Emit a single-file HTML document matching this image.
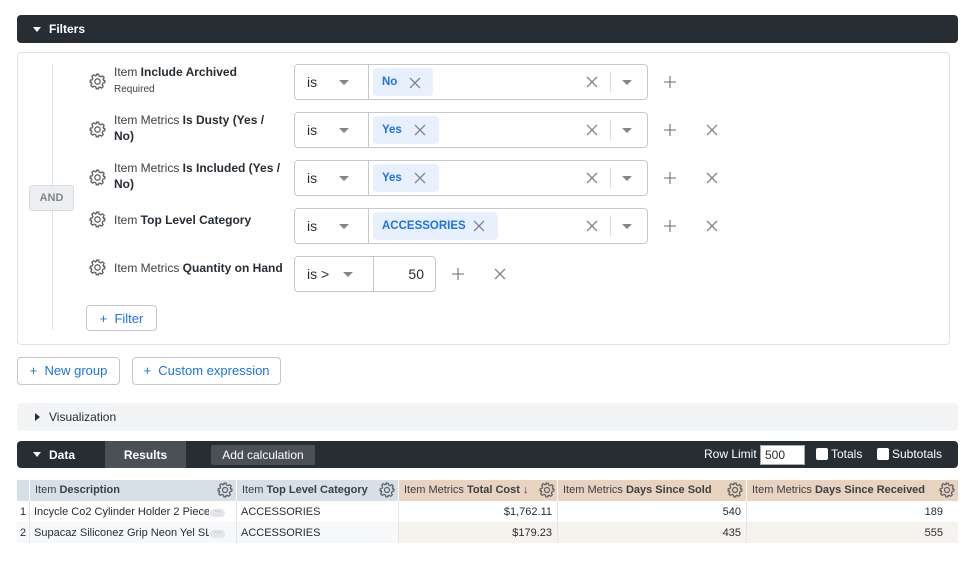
<!DOCTYPE html>
<html><head><meta charset="utf-8"><style>
*{box-sizing:border-box;margin:0;padding:0}
body{width:970px;height:566px;background:#fff;font-family:"Liberation Sans",sans-serif;color:#262d33;position:relative;overflow:hidden}
.a{position:absolute}
.bar{background:#262d33;border-radius:4px;color:#fff}
.lbl{font-size:12px;line-height:16px;color:#3c4043}
.lbl b{color:#262d33}
.box{border:1px solid #c4c8cc;background:#fff}
.chip{background:#e8f0fe;border-radius:4px;color:#1a73e8;font-weight:bold;font-size:11.5px;line-height:28px;padding-left:9px}
.btn{border:1px solid #c4c8cc;border-radius:4px;color:#1a73e8;font-size:13px;line-height:26px;text-align:center}
.th{font-size:11px;line-height:21px;padding-left:5px;color:#3c4043;overflow:hidden;white-space:nowrap}
.td{font-size:11px;line-height:22px;padding:0 5px;color:#262d33;white-space:nowrap;overflow:hidden}
</style></head><body>
<svg width="0" height="0" style="position:absolute"><defs>
<g id="gear"><circle cx="7" cy="7" r="2.2" fill="none" stroke="#5f6368" stroke-width="1.1"/><path d="M6 1h2l.4 1.6 1.3.6 1.4-.9 1.4 1.4-.9 1.4.6 1.3L13 6v2l-1.6.4-.6 1.3.9 1.4-1.4 1.4-1.4-.9-1.3.6L8 13H6l-.4-1.6-1.3-.6-1.4.9-1.4-1.4.9-1.4-.6-1.3L1 8V6l1.6-.4.6-1.3-.9-1.4 1.4-1.4 1.4.9 1.3-.6z" fill="none" stroke="#5f6368" stroke-width="1.1" stroke-linejoin="round"/></g>
<g id="xx"><path d="M1 1l10 10M11 1L1 11" stroke="#80868b" stroke-width="1.3"/></g>
<g id="pl"><path d="M6 0v12M0 6h12" stroke="#80868b" stroke-width="1.3"/></g>
<g id="car"><path d="M0 0h10l-5 5z" fill="#80868b"/></g>
</defs></svg>

<div class="a bar" style="left:17px;top:15px;width:941px;height:28px"></div>
<div class="a" style="left:33px;top:27px;width:0;height:0;border-left:4px solid transparent;border-right:4px solid transparent;border-top:5px solid #fff"></div>
<div class="a" style="left:49px;top:22px;font-size:12px;font-weight:bold;color:#fff;line-height:15px">Filters</div>

<div class="a" style="left:17px;top:52px;width:933px;height:293px;border:1px solid #dee1e5;border-radius:4px"></div>
<div class="a" style="left:52px;top:64px;width:1px;height:266px;background:#dee1e5"></div>
<div class="a" style="left:29px;top:185px;width:45px;height:26px;background:#eceff1;border:1px solid #dadce0;border-radius:3px;font-size:11px;font-weight:bold;color:#80868b;text-align:center;line-height:24px">AND</div>

<svg class="a" style="left:89px;top:73px" width="17" height="17" viewBox="0 0 14 14"><use href="#gear"/></svg>
<div class="a lbl" style="left:114px;top:64px">Item <b>Include Archived</b><br><span style="font-size:10px;color:#3c4043">Required</span></div>
<svg class="a" style="left:89px;top:121px" width="17" height="17" viewBox="0 0 14 14"><use href="#gear"/></svg>
<div class="a lbl" style="left:114px;top:112px;width:170px">Item Metrics <b>Is Dusty (Yes / No)</b></div>
<svg class="a" style="left:89px;top:169px" width="17" height="17" viewBox="0 0 14 14"><use href="#gear"/></svg>
<div class="a lbl" style="left:114px;top:160px;width:170px">Item Metrics <b>Is Included (Yes / No)</b></div>
<svg class="a" style="left:89px;top:211px" width="17" height="17" viewBox="0 0 14 14"><use href="#gear"/></svg>
<div class="a lbl" style="left:114px;top:212px">Item <b>Top Level Category</b></div>
<svg class="a" style="left:89px;top:259px" width="17" height="17" viewBox="0 0 14 14"><use href="#gear"/></svg>
<div class="a lbl" style="left:114px;top:260px">Item Metrics <b>Quantity on Hand</b></div>

<div class="a box" style="left:294px;top:64px;width:354px;height:36px;border-radius:4px"></div>
<div class="a" style="left:368px;top:64px;width:1px;height:36px;background:#c4c8cc"></div>
<div class="a" style="left:307px;top:74px;font-size:14px">is</div>
<svg class="a" style="left:339px;top:80px" width="10" height="5"><use href="#car"/></svg>
<div class="a chip" style="left:373px;top:68px;width:60px;height:28px">No</div>
<svg class="a" style="left:409px;top:77px" width="12" height="12"><use href="#xx"/></svg>
<svg class="a" style="left:586px;top:76px" width="12" height="12"><use href="#xx"/></svg>
<div class="a" style="left:610px;top:72px;width:1px;height:20px;background:#dadce0"></div>
<svg class="a" style="left:622px;top:80px" width="10" height="5"><use href="#car"/></svg>
<svg class="a" style="left:664px;top:76px" width="12" height="12"><use href="#pl"/></svg>

<div class="a box" style="left:294px;top:112px;width:354px;height:36px;border-radius:4px"></div>
<div class="a" style="left:368px;top:112px;width:1px;height:36px;background:#c4c8cc"></div>
<div class="a" style="left:307px;top:122px;font-size:14px">is</div>
<svg class="a" style="left:339px;top:128px" width="10" height="5"><use href="#car"/></svg>
<div class="a chip" style="left:373px;top:116px;width:66px;height:28px">Yes</div>
<svg class="a" style="left:414px;top:124px" width="12" height="12"><use href="#xx"/></svg>
<svg class="a" style="left:586px;top:124px" width="12" height="12"><use href="#xx"/></svg>
<div class="a" style="left:610px;top:120px;width:1px;height:20px;background:#dadce0"></div>
<svg class="a" style="left:622px;top:128px" width="10" height="5"><use href="#car"/></svg>
<svg class="a" style="left:664px;top:124px" width="12" height="12"><use href="#pl"/></svg>
<svg class="a" style="left:706px;top:124px" width="12" height="12"><use href="#xx"/></svg>

<div class="a box" style="left:294px;top:160px;width:354px;height:36px;border-radius:4px"></div>
<div class="a" style="left:368px;top:160px;width:1px;height:36px;background:#c4c8cc"></div>
<div class="a" style="left:307px;top:170px;font-size:14px">is</div>
<svg class="a" style="left:339px;top:176px" width="10" height="5"><use href="#car"/></svg>
<div class="a chip" style="left:373px;top:164px;width:66px;height:28px">Yes</div>
<svg class="a" style="left:414px;top:172px" width="12" height="12"><use href="#xx"/></svg>
<svg class="a" style="left:586px;top:172px" width="12" height="12"><use href="#xx"/></svg>
<div class="a" style="left:610px;top:168px;width:1px;height:20px;background:#dadce0"></div>
<svg class="a" style="left:622px;top:176px" width="10" height="5"><use href="#car"/></svg>
<svg class="a" style="left:664px;top:172px" width="12" height="12"><use href="#pl"/></svg>
<svg class="a" style="left:706px;top:172px" width="12" height="12"><use href="#xx"/></svg>

<div class="a box" style="left:294px;top:208px;width:354px;height:36px;border-radius:4px"></div>
<div class="a" style="left:368px;top:208px;width:1px;height:36px;background:#c4c8cc"></div>
<div class="a" style="left:307px;top:218px;font-size:14px">is</div>
<svg class="a" style="left:339px;top:224px" width="10" height="5"><use href="#car"/></svg>
<div class="a chip" style="left:373px;top:212px;width:125px;height:28px">ACCESSORIES</div>
<svg class="a" style="left:473px;top:220px" width="12" height="12"><use href="#xx"/></svg>
<svg class="a" style="left:586px;top:220px" width="12" height="12"><use href="#xx"/></svg>
<div class="a" style="left:610px;top:216px;width:1px;height:20px;background:#dadce0"></div>
<svg class="a" style="left:622px;top:224px" width="10" height="5"><use href="#car"/></svg>
<svg class="a" style="left:664px;top:220px" width="12" height="12"><use href="#pl"/></svg>
<svg class="a" style="left:706px;top:220px" width="12" height="12"><use href="#xx"/></svg>

<div class="a box" style="left:294px;top:256px;width:142px;height:36px;border-radius:4px"></div>
<div class="a" style="left:373px;top:256px;width:1px;height:36px;background:#c4c8cc"></div>
<div class="a" style="left:307px;top:266px;font-size:14px">is &gt;</div>
<svg class="a" style="left:343px;top:272px" width="10" height="5"><use href="#car"/></svg>
<div class="a" style="left:380px;top:266px;width:44px;text-align:right;font-size:14px">50</div>
<svg class="a" style="left:452px;top:268px" width="12" height="12"><use href="#pl"/></svg>
<svg class="a" style="left:494px;top:268px" width="12" height="12"><use href="#xx"/></svg>

<div class="a btn" style="left:86px;top:305px;width:71px;height:26px">+&nbsp; Filter</div>
<div class="a btn" style="left:17px;top:357px;width:103px;height:28px;line-height:26px">+&nbsp; New group</div>
<div class="a btn" style="left:132px;top:357px;width:149px;height:28px;line-height:26px">+&nbsp; Custom expression</div>

<div class="a" style="left:17px;top:403px;width:941px;height:28px;background:#f3f4f5;border-radius:4px"></div>
<div class="a" style="left:35px;top:413px;width:0;height:0;border-top:4px solid transparent;border-bottom:4px solid transparent;border-left:5px solid #262d33"></div>
<div class="a" style="left:49px;top:410px;font-size:12px;line-height:15px">Visualization</div>

<div class="a bar" style="left:17px;top:441px;width:941px;height:27px"></div>
<div class="a" style="left:33px;top:452px;width:0;height:0;border-left:4px solid transparent;border-right:4px solid transparent;border-top:5px solid #fff"></div>
<div class="a" style="left:49px;top:448px;font-size:12px;font-weight:bold;color:#fff;line-height:15px">Data</div>
<div class="a" style="left:105px;top:441px;width:81px;height:27px;background:#4a5056;color:#fff;font-size:12px;font-weight:bold;text-align:center;line-height:29px">Results</div>
<div class="a" style="left:211px;top:445px;width:104px;height:20px;background:#4a5056;border-radius:2px;color:#fff;font-size:12px;text-align:center;line-height:20px">Add calculation</div>
<div class="a" style="left:704px;top:447px;color:#fff;font-size:12px;line-height:15px">Row Limit</div>
<div class="a" style="left:760px;top:445px;width:45px;height:20px;background:#fff;border:1px solid #aaa;font-size:12px;line-height:18px;padding-left:4px">500</div>
<div class="a" style="left:816px;top:448px;width:12px;height:12px;background:#fff;border-radius:2px"></div>
<div class="a" style="left:831px;top:447px;color:#fff;font-size:12px;line-height:15px">Totals</div>
<div class="a" style="left:877px;top:448px;width:12px;height:12px;background:#fff;border-radius:2px"></div>
<div class="a" style="left:892px;top:447px;color:#fff;font-size:12px;line-height:15px">Subtotals</div>

<div class="a" style="left:17px;top:480px;width:12px;height:21px;background:#d7dfe9"></div>
<div class="a th" style="left:29px;top:480px;width:207px;height:21px;background:#d7dfe9;border-left:1px solid #fff">Item <b>Description</b></div>
<div class="a th" style="left:236px;top:480px;width:162px;height:21px;background:#d7dfe9;border-left:1px solid #fff">Item <b>Top Level Category</b></div>
<div class="a th" style="left:398px;top:480px;width:159px;height:21px;background:#e8d2c0;border-left:1px solid #fff">Item Metrics <b>Total Cost ↓</b></div>
<div class="a th" style="left:557px;top:480px;width:189px;height:21px;background:#e8d2c0;border-left:1px solid #fff">Item Metrics <b>Days Since Sold</b></div>
<div class="a th" style="left:746px;top:480px;width:212px;height:21px;background:#e8d2c0;border-left:1px solid #fff">Item Metrics <b>Days Since Received</b></div>
<svg class="a" style="left:217px;top:482px" width="16" height="16" viewBox="0 0 14 14"><use href="#gear"/></svg>
<svg class="a" style="left:379px;top:482px" width="16" height="16" viewBox="0 0 14 14"><use href="#gear"/></svg>
<svg class="a" style="left:539px;top:482px" width="16" height="16" viewBox="0 0 14 14"><use href="#gear"/></svg>
<svg class="a" style="left:727px;top:482px" width="16" height="16" viewBox="0 0 14 14"><use href="#gear"/></svg>
<svg class="a" style="left:939px;top:482px" width="16" height="16" viewBox="0 0 14 14"><use href="#gear"/></svg>

<div class="a" style="left:17px;top:522px;width:381px;height:21px;background:#f7f8fa"></div>
<div class="a" style="left:398px;top:522px;width:560px;height:21px;background:#f6f2ee"></div>
<div class="a" style="left:29px;top:501px;width:1px;height:42px;background:#e3e5e8"></div>
<div class="a" style="left:236px;top:501px;width:1px;height:42px;background:#e3e5e8"></div>
<div class="a" style="left:398px;top:501px;width:1px;height:42px;background:#e3e5e8"></div>
<div class="a" style="left:557px;top:501px;width:1px;height:42px;background:#e3e5e8"></div>
<div class="a" style="left:746px;top:501px;width:1px;height:42px;background:#e3e5e8"></div>

<div class="a td" style="left:17px;top:501px;width:12px;padding:0 0 0 3px">1</div>
<div class="a td" style="left:29px;top:501px;width:180px">Incycle Co2 Cylinder Holder 2 Piece</div>
<div class="a" style="left:210px;top:509px;width:15px;height:8px;background:#e3e5e8;border-radius:4px;font-size:7px;line-height:6px;text-align:center;color:#888">···</div>
<div class="a td" style="left:236px;top:501px;width:162px">ACCESSORIES</div>
<div class="a td" style="left:398px;top:501px;width:159px;text-align:right">$1,762.11</div>
<div class="a td" style="left:557px;top:501px;width:189px;text-align:right">540</div>
<div class="a td" style="left:746px;top:501px;width:212px;text-align:right;padding-right:15px">189</div>

<div class="a td" style="left:17px;top:522px;width:12px;padding:0 0 0 3px">2</div>
<div class="a td" style="left:29px;top:522px;width:180px">Supacaz Siliconez Grip Neon Yel SL</div>
<div class="a" style="left:210px;top:530px;width:15px;height:8px;background:#e3e5e8;border-radius:4px;font-size:7px;line-height:6px;text-align:center;color:#888">···</div>
<div class="a td" style="left:236px;top:522px;width:162px">ACCESSORIES</div>
<div class="a td" style="left:398px;top:522px;width:159px;text-align:right">$179.23</div>
<div class="a td" style="left:557px;top:522px;width:189px;text-align:right">435</div>
<div class="a td" style="left:746px;top:522px;width:212px;text-align:right;padding-right:15px">555</div>
</body></html>
